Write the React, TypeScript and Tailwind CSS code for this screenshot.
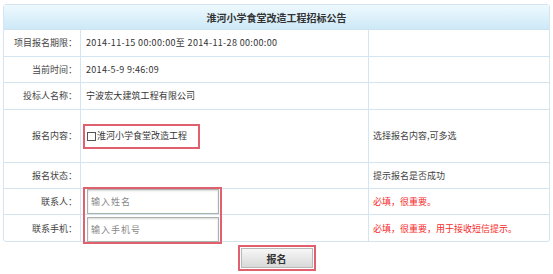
import React from "react";

const font = { fontFamily: '"Noto Sans CJK SC", "Microsoft YaHei", sans-serif' };

type Row = { label: string; h: string; value?: React.ReactNode; note?: React.ReactNode };

export default function App() {
  const rows: Row[] = [
    {
      label: "项目报名期限：",
      h: "h-[27px]",
      value: <span className="tracking-[0.35px]">2014-11-15 00:00:00至 2014-11-28 00:00:00</span>,
    },
    { label: "当前时间：", h: "h-[26px]", value: <span className="tracking-[0.3px]">2014-5-9 9:46:09</span> },
    { label: "投标人名称：", h: "h-[27px]", value: <span className="tracking-[0.1px]">宁波宏大建筑工程有限公司</span> },
    {
      label: "报名内容：",
      h: "h-[53px]",
      value: (
        <span className="-ml-[3px] flex h-[25px] w-[117px] items-center border-2 border-[#e0606f] pl-[2px]">
          <span className="mr-[1px] inline-block h-[9px] w-[9px] border border-[#555] bg-white" />
          淮河小学食堂改造工程
        </span>
      ),
      note: "选择报名内容,可多选",
    },
    { label: "报名状态：", h: "h-[26px]", note: "提示报名是否成功" },
    {
      label: "联系人：",
      h: "h-[26px]",
      value: (
        <input
          placeholder="输入姓名"
          className="ml-[1px] h-[25px] w-[132px] border border-[#aab3aa] bg-white px-[3px] text-[9px] tracking-[1px] shadow-[inset_0_1px_2px_rgba(0,0,0,.15)] outline-none placeholder:text-[#888]"
        />
      ),
      note: <span className="text-[#f52a2a]">必填，很重要。</span>,
    },
    {
      label: "联系手机：",
      h: "h-[26px]",
      value: (
        <input
          placeholder="输入手机号"
          className="ml-[1px] mt-[2px] h-[25px] w-[132px] border border-[#aab3aa] bg-white px-[3px] text-[9px] tracking-[1px] shadow-[inset_0_1px_2px_rgba(0,0,0,.15)] outline-none placeholder:text-[#888]"
        />
      ),
      note: <span className="text-[#f52a2a]">必填，很重要，用于接收短信提示。</span>,
    },
  ];

  return (
    <div className="relative h-[274px] w-[553px] overflow-hidden bg-white px-[3px] pt-[4px] text-[9px] text-[#333]" style={font}>
      <div className="w-[547px] rounded-[3px] border border-[#d4e5f1]">
        <div className="flex h-[25px] items-center justify-center border-b border-[#cfe2ef] bg-gradient-to-b from-[#eef9fe] to-[#cde9f7] text-[10px] font-bold text-[#333]">
          淮河小学食堂改造工程招标公告
        </div>
        {rows.map((r, i) => (
          <div
            key={r.label}
            className={`grid grid-cols-[77px_288px_1fr] ${r.h} ${i < rows.length - 1 ? "border-b border-[#d4e5f1]" : ""}`}
          >
            <div className="flex items-center justify-end border-r border-[#d4e5f1] pr-[3px] text-[#444]">{r.label}</div>
            <div className="flex items-center border-r border-[#d4e5f1] pl-[5px]">{r.value}</div>
            <div className="flex items-center pl-[4px] text-[#444]">{r.note}</div>
          </div>
        ))}
      </div>

      <div className="mt-[3px] flex justify-center">
        <div className="h-[26px] w-[78px] border-2 border-[#e0606f] p-[1px]">
          <button className="h-full w-full border border-[#b8b8b8] bg-gradient-to-b from-[#f7f7f7] to-[#d9d9d9] text-[10px] font-bold text-[#333]">
            报名
          </button>
        </div>
      </div>

      {/* 联系方式高亮框 */}
      <div className="pointer-events-none absolute left-[83px] top-[187px] h-[57px] w-[139px] border-2 border-[#e0606f]" />
    </div>
  );
}
